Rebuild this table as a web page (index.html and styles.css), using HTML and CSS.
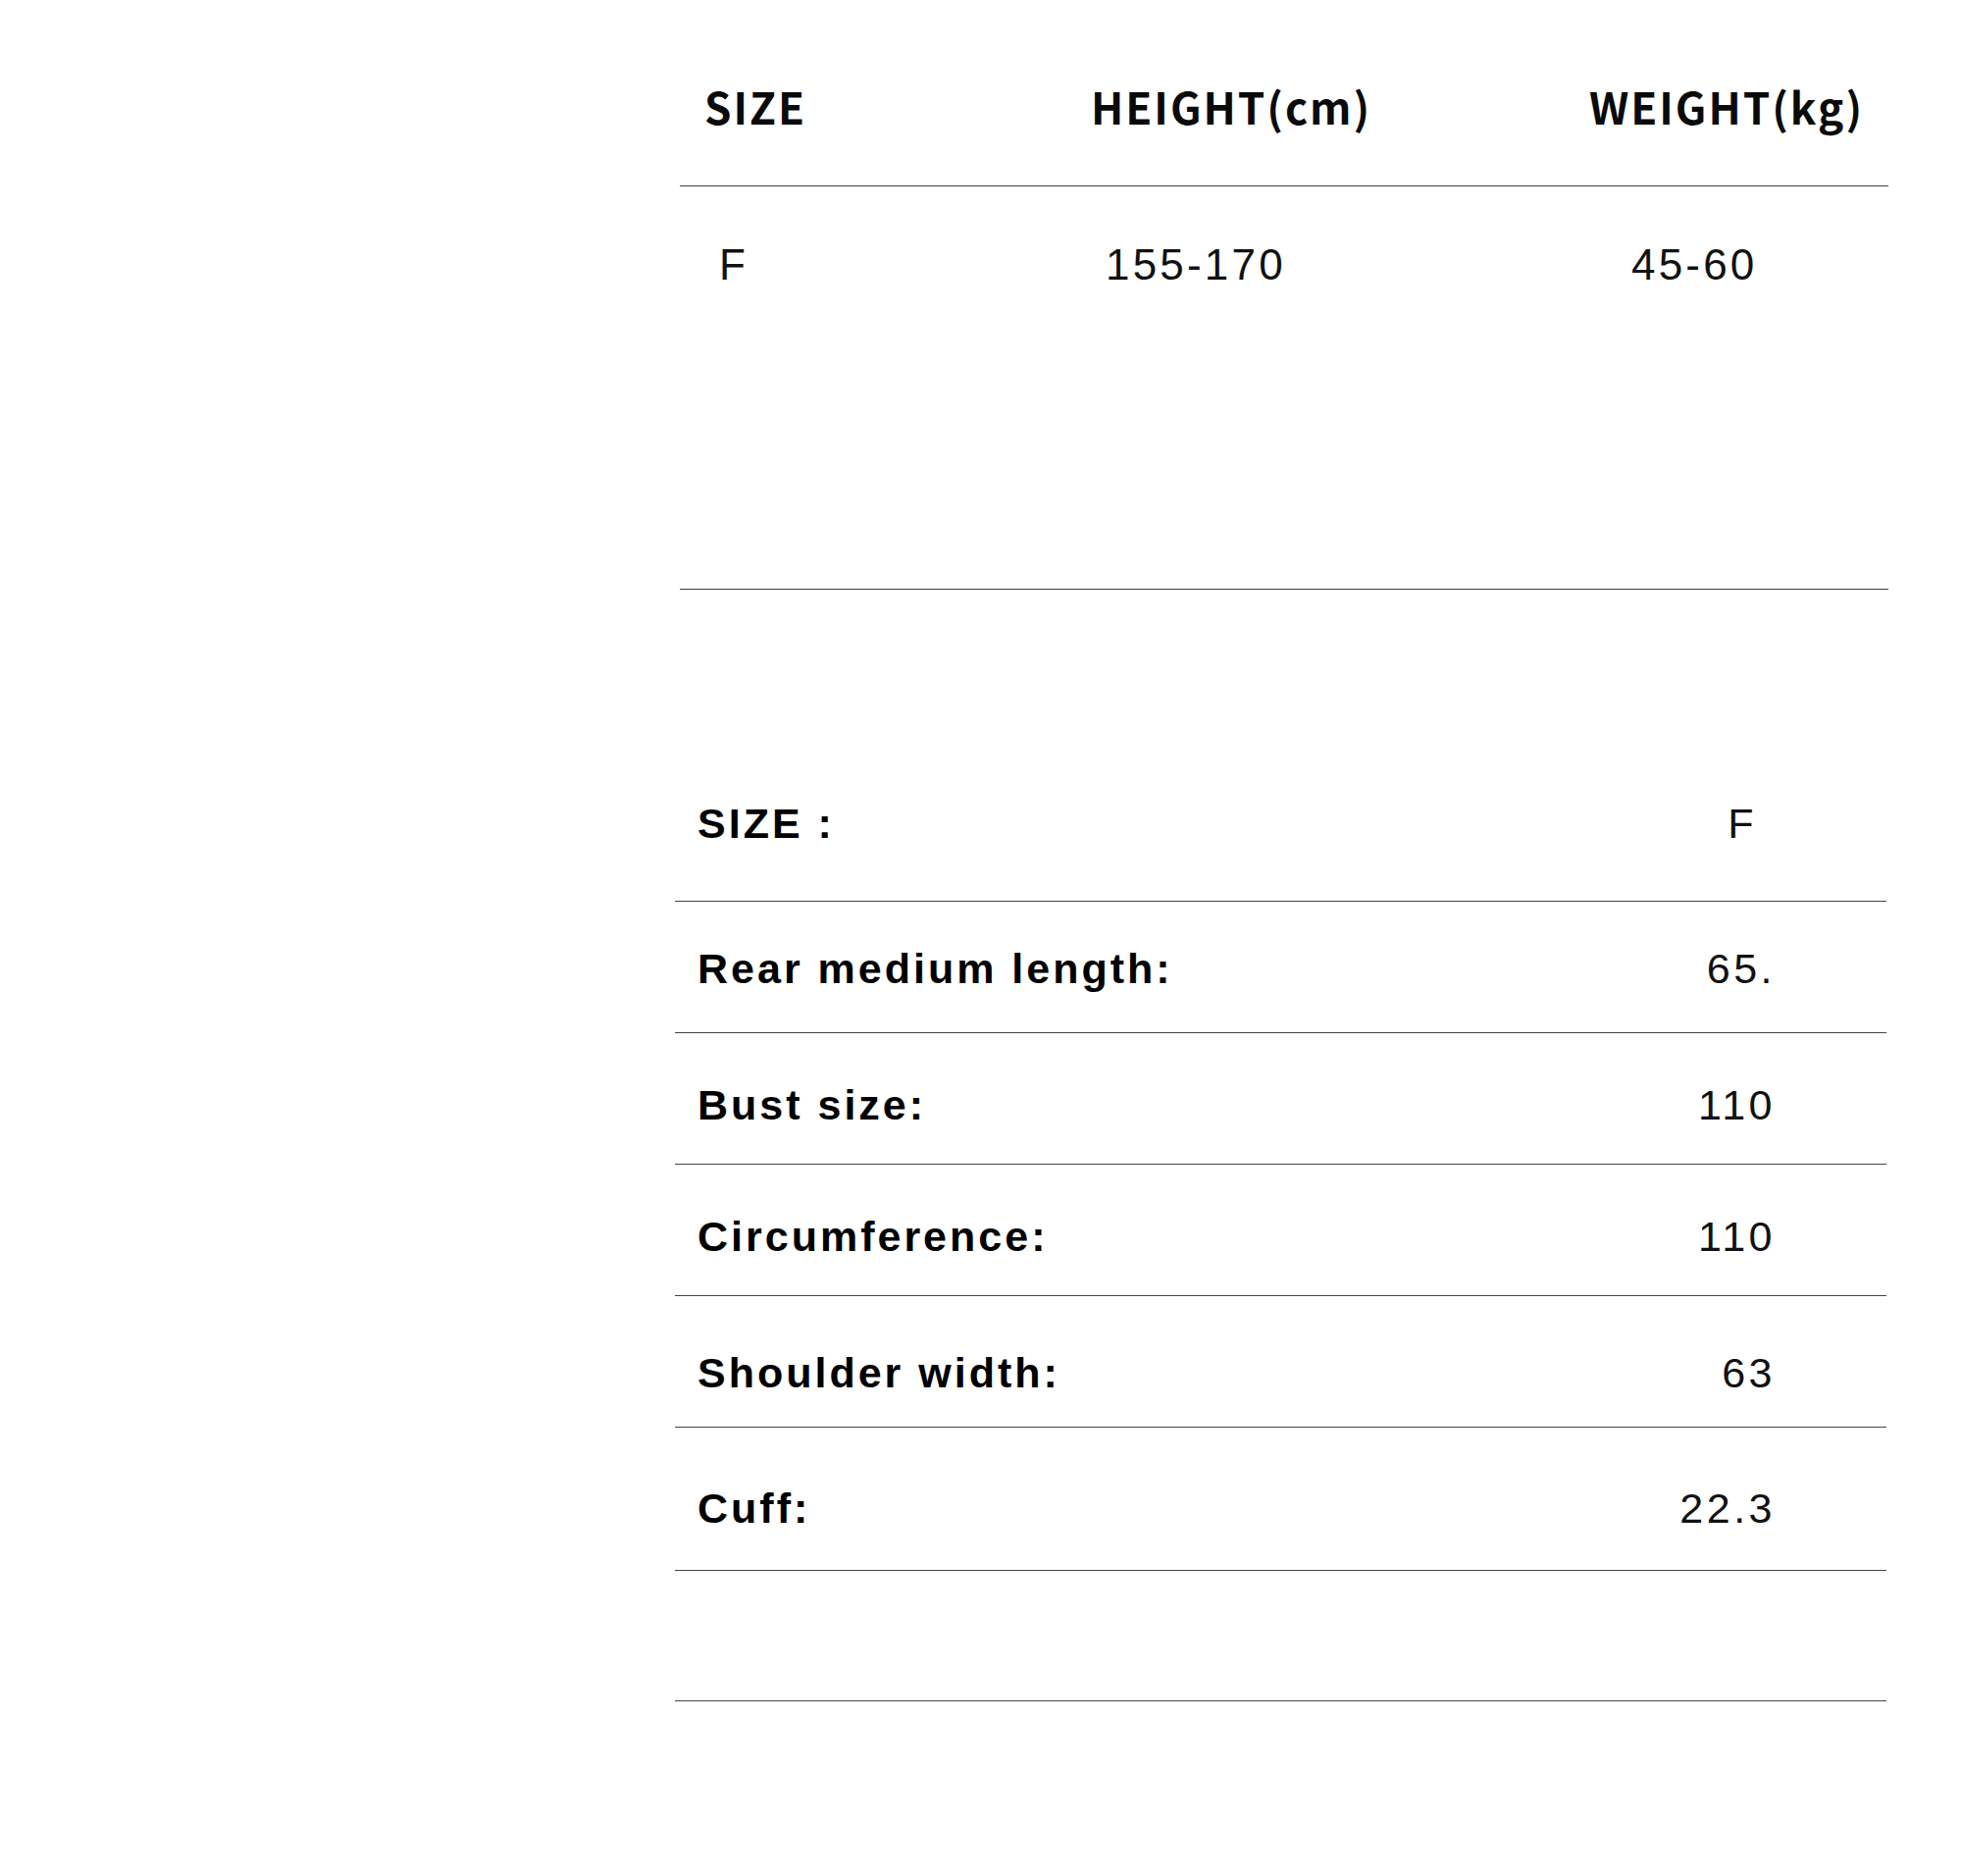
FILE: index.html
```html
<!DOCTYPE html>
<html lang="en">
<head>
<meta charset="utf-8">
<title>Size chart</title>
<link rel="stylesheet" href="styles.css">
</head>
<body>
<main class="page">
  <section class="chart">
    <div class="chart-row chart-row--head">
      <div class="chart-cell">SIZE</div>
      <div class="chart-cell">HEIGHT(cm)</div>
      <div class="chart-cell">WEIGHT(kg)</div>
    </div>
    <div class="chart-row chart-row--body">
      <div class="chart-cell">F</div>
      <div class="chart-cell">155-170</div>
      <div class="chart-cell chart-cell--wide">45-60</div>
    </div>
  </section>

  <section class="measure">
    <div class="m-row m-row--head">
      <span class="m-label">SIZE :</span>
      <span class="m-value m-value--size">F</span>
    </div>
    <div class="m-row m-row--first">
      <span class="m-label">Rear medium length:</span>
      <span class="m-value">65.</span>
    </div>
    <div class="m-row">
      <span class="m-label">Bust size:</span>
      <span class="m-value">110</span>
    </div>
    <div class="m-row">
      <span class="m-label">Circumference:</span>
      <span class="m-value">110</span>
    </div>
    <div class="m-row m-row--low">
      <span class="m-label">Shoulder width:</span>
      <span class="m-value">63</span>
    </div>
    <div class="m-row m-row--tall">
      <span class="m-label">Cuff:</span>
      <span class="m-value">22.3</span>
    </div>
    <div class="m-row m-row--empty"></div>
  </section>
</main>
</body>
</html>
```

FILE: styles.css
```css
html, body {
  margin: 0;
  padding: 0;
  background: #ffffff;
}

body {
  width: 2000px;
  height: 1912px;
  overflow: hidden;
  color: #000;
}

.page {
  padding-left: 688px;
}

/* ---------- first chart ---------- */
.chart {
  margin-left: 5px;
  width: 1232px;
}

.chart-row {
  display: grid;
  grid-template-columns: 394px 508px 1fr;
  padding-left: 25px;
  border-bottom: 1px solid #404040;
}

.chart-row--head {
  padding-top: 76px;
  padding-bottom: 49px;
  font-family: "Noto Sans CJK SC", "Noto Sans", sans-serif;
  font-weight: 700;
  font-size: 44px;
  line-height: 64px;
  letter-spacing: 2px;
  color: #0a0a0a;
}

.chart-row--body {
  padding-top: 55px;
  padding-bottom: 305px;
  font-family: "Liberation Sans", Arial, sans-serif;
  font-weight: 400;
  font-size: 44px;
  line-height: 50px;
  letter-spacing: 3.2px;
  color: #111;
}

.chart-row--body .chart-cell {
  padding-left: 15px;
}

.chart-row--body .chart-cell--wide {
  padding-left: 43px;
}

/* ---------- measurement list ---------- */
.measure {
  margin-top: 213px;
  width: 1235px;
}

.m-row {
  display: flex;
  justify-content: space-between;
  align-items: flex-start;
  padding: 48px 113px 35px 23px;
  border-bottom: 1px solid #454545;
  font-family: "Liberation Sans", Arial, sans-serif;
  font-size: 43px;
  line-height: 50px;
  letter-spacing: 3px;
}

.m-row--head {
  padding-top: 0;
  padding-bottom: 54px;
}

.m-row--first {
  padding-top: 43px;
  padding-bottom: 40px;
}

.m-row--low {
  padding-top: 53px;
  padding-bottom: 30px;
}

.m-row--tall {
  padding-top: 57px;
  padding-bottom: 38px;
}

.m-row--empty {
  height: 133px;
  padding: 0;
  box-sizing: border-box;
}

.m-label {
  font-weight: 700;
  color: #000;
}

.m-value {
  font-weight: 400;
  letter-spacing: 3.5px;
  color: #111;
}

.m-value--size {
  margin-right: 19px;
}
```
